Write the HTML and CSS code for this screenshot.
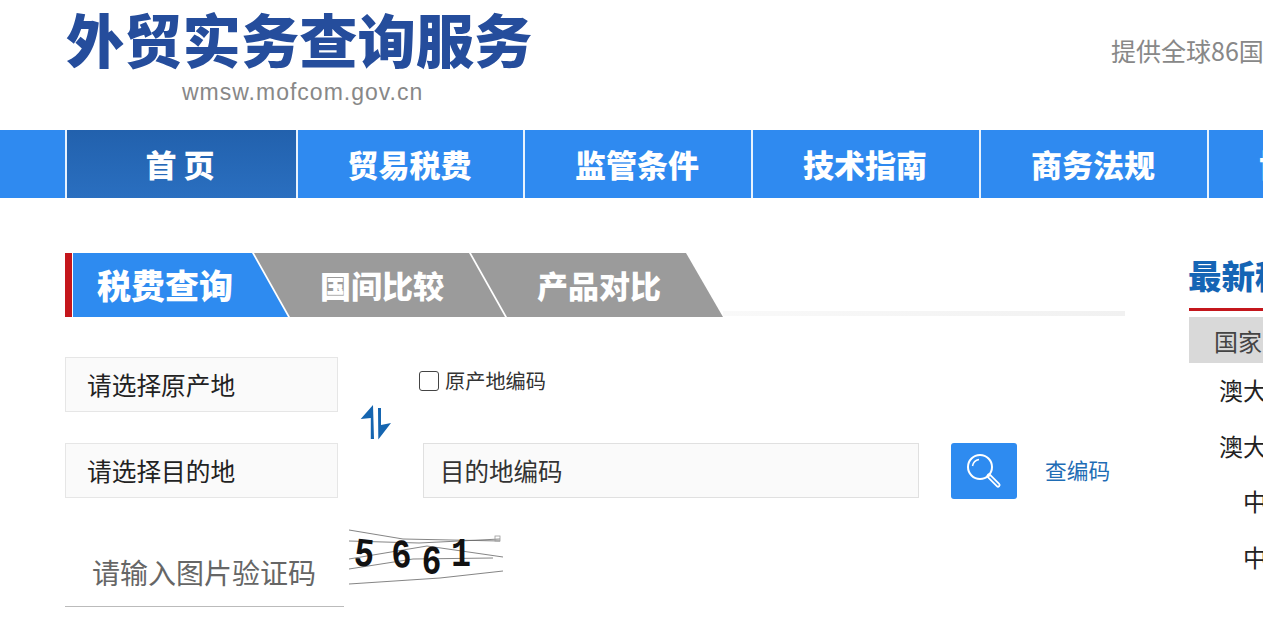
FILE: index.html
```html
<!DOCTYPE html>
<html>
<head>
    <title>外贸实务查询服务</title>
    <meta name="viewport" content="width=device-width, initial-scale=1.0">
    <link rel="stylesheet" href="styles.css">
</head>
<body>
    <header class="site-header">
        <div class="brand">
            <h1>外贸实务查询服务</h1>
            <p class="brand-url">wmsw.mofcom.gov.cn</p>
        </div>
        <p class="site-note">提供全球86国家（地区）贸易税费查询</p>
    </header>

    <nav class="main-nav">
        <a class="nav-item active" href="#">首 页</a>
        <a class="nav-item" href="#">贸易税费</a>
        <a class="nav-item" href="#">监管条件</a>
        <a class="nav-item" href="#">技术指南</a>
        <a class="nav-item" href="#">商务法规</a>
        <a class="nav-item" href="#">协定税率</a>
    </nav>

    <main class="content">
        <section class="left-col">
            <div class="tabs">
                <a class="tab tab-first" href="#">税费查询</a>
                <a class="tab" href="#">国间比较</a>
                <a class="tab tab-last" href="#">产品对比</a>
                <span class="tabs-line"></span>
            </div>

            <form class="query">
                <div class="selects">
                    <div class="select-box">请选择原产地</div>
                    <div class="select-box">请选择目的地</div>
                </div>
                <div class="swap">
                    <svg width="32" height="35" viewBox="0 0 32 35">
                        <path fill="#1565b0" d="M13 0 L0.7 14 L10.8 13 L10.8 34 L14 34 Z"/>
                        <path fill="#1565b0" d="M18 3 L21 3 L21 20 L31 18 L18.3 34.5 Z"/>
                    </svg>
                </div>
                <div class="codes">
                    <label class="check-row">
                        <input type="checkbox" class="check">
                        <span>原产地编码</span>
                    </label>
                    <div class="code-row">
                        <input class="code-input" type="text" placeholder="目的地编码">
                        <button class="search-btn" type="button">
                            <svg width="38" height="38" viewBox="0 0 38 38">
                                <circle cx="15" cy="15" r="12" fill="none" stroke="#fff" stroke-width="2"/>
                                <path d="M7.5 14 A8 8 0 0 1 14 7.5" fill="none" stroke="#fff" stroke-width="1.5"/>
                                <path d="M24 24 L33 33" stroke="#fff" stroke-width="5" stroke-linecap="round"/>
                                <path d="M25 25 L33 33" stroke="#2e8bf0" stroke-width="1.5" stroke-linecap="round"/>
                            </svg>
                        </button>
                        <a class="code-link" href="#">查编码</a>
                    </div>
                </div>
            </form>

            <div class="captcha-row">
                <input class="captcha-input" type="text" placeholder="请输入图片验证码">
                <svg class="captcha" width="155" height="58" viewBox="0 0 155 58">
                    <g fill="none" stroke="#666" stroke-width="0.8">
                        <path d="M0 1 L54 10 L151 12"/>
                        <path d="M0 12 L70 14 L151 10"/>
                        <path d="M0 30 L48 22 L78 17 L154 28"/>
                        <path d="M0 40 L64 30 L144 29"/>
                        <path d="M0 55 L91 49 L154 42"/>
                        <rect x="146" y="7" width="5" height="5" stroke="#999"/>
                    </g>
                    <g class="captcha-digits">
                        <text transform="translate(4 36) rotate(6) scale(1.15 1.4)">5</text>
                        <text transform="translate(43 39) rotate(-3) scale(1.15 1.4)">6</text>
                        <text transform="translate(72 44) rotate(3) scale(1.15 1.4)">6</text>
                        <text transform="translate(102 37) scale(1.15 1.4)">1</text>
                    </g>
                </svg>
            </div>
        </section>

        <aside class="right-col">
            <h2 class="latest-title">最新税率调整</h2>
            <div class="latest-head">国家（地区）</div>
            <div class="latest-row">澳大利亚</div>
            <div class="latest-row">澳大利亚</div>
            <div class="latest-row">中国</div>
            <div class="latest-row">中国</div>
        </aside>
    </main>
</body>
</html>
```

FILE: styles.css
```css
/* Base styles */
* {
    box-sizing: border-box;
    margin: 0;
    padding: 0;
}

html, body {
    height: 100%;
    overflow: hidden;
}

body {
    width: 1263px;
    background-color: #fff;
    color: #222;
    font-family: "Noto Sans CJK SC", "Liberation Sans", sans-serif;
}

a {
    text-decoration: none;
}

/* Header */
.site-header {
    display: flex;
    height: 130px;
    padding-left: 66px;
}

.brand {
    width: 1045px;
    flex-shrink: 0;
}

h1 {
    color: #254d9c;
    font-size: 58.3px;
    font-weight: 900;
    line-height: 58px;
    margin-top: 9px;
    white-space: nowrap;
}

.brand-url {
    color: #888;
    font-family: "Liberation Sans", sans-serif;
    font-size: 23px;
    letter-spacing: 1px;
    line-height: 28px;
    margin-top: 11px;
    padding-left: 116px;
}

.site-note {
    color: #888;
    font-size: 25px;
    line-height: 30px;
    margin-top: 35px;
    white-space: nowrap;
}

/* Nav */
.main-nav {
    display: flex;
    height: 68px;
    padding-left: 65px;
    background-color: #2f8af0;
}

.nav-item {
    width: 228px;
    flex-shrink: 0;
    padding-right: 2px;
    border-left: 2px solid #e8f2fd;
    color: #fff;
    font-size: 31px;
    font-weight: 900;
    line-height: 68px;
    text-align: center;
    white-space: nowrap;
}

.nav-item.active {
    width: 231px;
    padding-right: 3px;
    background: linear-gradient(#2261ad, #2a6fc0);
}

.nav-item:nth-child(2) {
    width: 227px;
}

/* Content */
.content {
    display: flex;
    padding: 55px 0 0 65px;
}

.left-col {
    width: 1060px;
    flex-shrink: 0;
}

.tabs {
    display: flex;
    height: 64px;
    border-left: 7px solid #c4161c;
    padding-left: 1px;
}

.tab {
    width: 251px;
    flex-shrink: 0;
    margin-left: -34px;
    padding-left: 66px;
    background-color: #9b9b9b;
    clip-path: polygon(0 0, 215px 0, 100% 100%, 36px 100%);
    color: #fff;
    font-size: 31px;
    font-weight: 900;
    line-height: 64px;
    white-space: nowrap;
}

.tab-first {
    width: 215px;
    margin-left: 0;
    padding-left: 24px;
    background-color: #2e8bf0;
    clip-path: polygon(0 0, 179px 0, 100% 100%, 0 100%);
    font-size: 34px;
    line-height: 63px;
}

.tab-last {
    width: 252px;
}

.tabs-line {
    flex: 1;
    height: 5px;
    align-self: flex-end;
    margin-bottom: 1px;
    background: linear-gradient(to right, #f9f9f9, #f1f1f1);
}

/* Query form */
.query {
    display: flex;
    margin-top: 40px;
}

.selects {
    display: flex;
    flex-direction: column;
    gap: 31px;
    width: 273px;
}

.select-box {
    height: 55px;
    padding-left: 21px;
    border: 1px solid #e6e6e6;
    background-color: #fafafa;
    color: #222;
    font-size: 24.7px;
    line-height: 53px;
}

.swap {
    width: 81px;
    padding: 48px 0 0 22px;
}

.codes {
    display: flex;
    flex-direction: column;
    gap: 31px;
}

.check-row {
    display: flex;
    align-items: center;
    gap: 6px;
    height: 55px;
    padding-bottom: 8px;
    color: #333;
    font-size: 20.2px;
}

.check {
    appearance: none;
    width: 20px;
    height: 20px;
    border: 1px solid #444;
    border-radius: 3px;
    background-color: #fff;
}

.code-row {
    display: flex;
    align-items: flex-start;
    margin-left: 4px;
}

.code-input {
    width: 496px;
    height: 55px;
    padding-left: 16px;
    border: 1px solid #e0e0e0;
    background-color: #fafafa;
    font-family: inherit;
    font-size: 24.5px;
}

.code-input::placeholder {
    color: #333;
    opacity: 1;
}

.search-btn {
    display: flex;
    align-items: center;
    justify-content: center;
    width: 66px;
    height: 56px;
    margin-left: 32px;
    border: 0;
    border-radius: 3px;
    background-color: #2e8bf0;
}

.code-link {
    margin-left: 28px;
    color: #1f6db5;
    font-size: 21.7px;
    line-height: 54px;
    white-space: nowrap;
}

/* Captcha */
.captcha-row {
    display: flex;
    margin-top: 30px;
}

.captcha-input {
    width: 279px;
    height: 61px;
    margin-top: 17px;
    padding: 0 0 8px 27px;
    border: 0;
    border-bottom: 1px solid #bbb;
    background: transparent;
    font-family: inherit;
    font-size: 28px;
}

.captcha-input::placeholder {
    color: #666;
    opacity: 1;
}

.captcha {
    margin-left: 5px;
}

.captcha-digits {
    fill: #111;
    font-family: "Liberation Mono", monospace;
    font-size: 29px;
    font-weight: 700;
}

/* Right column */
.right-col {
    width: 400px;
    flex-shrink: 0;
    margin-left: 64px;
}

.latest-title {
    height: 58px;
    margin-bottom: 6px;
    border-bottom: 3px solid #c4161c;
    color: #1565b5;
    font-size: 33.5px;
    font-weight: 900;
    line-height: 44px;
    text-indent: -1px;
    white-space: nowrap;
}

.latest-head {
    height: 46px;
    padding-left: 25px;
    background-color: #d9d9d9;
    color: #444;
    font-size: 24px;
    line-height: 48px;
}

.latest-row {
    width: 156px;
    height: 55.5px;
    color: #222;
    font-size: 24px;
    line-height: 53px;
    text-align: center;
    white-space: nowrap;
}
```
